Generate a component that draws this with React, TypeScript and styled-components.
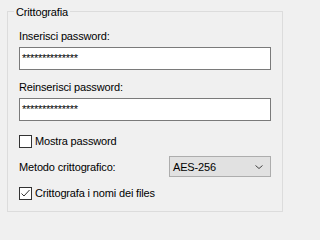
import React from 'react'
import styled, { createGlobalStyle } from 'styled-components'

const GlobalStyle = createGlobalStyle`
  html, body {
    margin: 0;
    padding: 0;
    background: #f0f0f0;
  }
  body {
    width: 291px;
    height: 224px;
    overflow: hidden;
    font-family: "Liberation Sans", Arial, sans-serif;
    font-size: 11px;
    letter-spacing: -0.15px;
    color: #000;
  }
`

const App = () => {
  return (
    <>
      <GlobalStyle />
      <GroupBox>
        <Legend>Crittografia</Legend>
        <Label $top={16}>Inserisci password:</Label>
        <PasswordBox>**************</PasswordBox>
        <Label $top={9}>Reinserisci password:</Label>
        <PasswordBox>**************</PasswordBox>
        <CheckRow $top={12}>
          <CheckBox />
          <span>Mostra password</span>
        </CheckRow>
        <ComboRow>
          <span>Metodo crittografico:</span>
          <Combo>
            <span>AES-256</span>
            <svg width="8" height="4" viewBox="0 0 8 4">
              <path d="M0.5 0.5 L4 3.5 L7.5 0.5" fill="none" stroke="#444" strokeWidth="1" />
            </svg>
          </Combo>
        </ComboRow>
        <CheckRow $top={8}>
          <CheckBox>
            <svg width="11" height="11" viewBox="0 0 11 11">
              <path d="M1.5 5.5 L4 8 L9.5 2" fill="none" stroke="#333" strokeWidth="1" />
            </svg>
          </CheckBox>
          <span>Crittografa i nomi dei files</span>
        </CheckRow>
      </GroupBox>
    </>
  )
}

export default App

const GroupBox = styled.div`
  position: relative;
  box-sizing: border-box;
  margin: 11px 0 0 7px;
  width: 276px;
  height: 201px;
  border: 1px solid #dcdcdc;
  padding: 0 11px 0 11px;
  display: flex;
  flex-direction: column;
`

const Legend = styled.span`
  position: absolute;
  top: -8px;
  left: 6px;
  padding: 0 2px;
  background: #f0f0f0;
  line-height: 16px;
`

const Label = styled.div<{ $top: number }>`
  margin-top: ${p => p.$top}px;
  line-height: 16px;
`

const PasswordBox = styled.div`
  box-sizing: border-box;
  margin-top: 3px;
  width: 252px;
  height: 23px;
  border: 1px solid #7a7a7a;
  background: #fff;
  padding: 3px 2px 0;
  line-height: 14px;
  letter-spacing: -0.3px;
`

const CheckRow = styled.div<{ $top: number }>`
  margin-top: ${p => p.$top}px;
  display: flex;
  align-items: center;
  gap: 3px;
  height: 16px;
`

const CheckBox = styled.span`
  box-sizing: border-box;
  width: 13px;
  height: 13px;
  border: 1px solid #333;
  background: #fff;
  display: flex;
  align-items: center;
  justify-content: center;
`

const ComboRow = styled.div`
  margin-top: 7px;
  display: flex;
  align-items: center;
  justify-content: space-between;
  width: 252px;
`

const Combo = styled.div`
  box-sizing: border-box;
  width: 102px;
  height: 21px;
  border: 1px solid #adadad;
  background: #e1e1e1;
  display: flex;
  align-items: center;
  justify-content: space-between;
  padding: 0 7px 0 3px;
`
